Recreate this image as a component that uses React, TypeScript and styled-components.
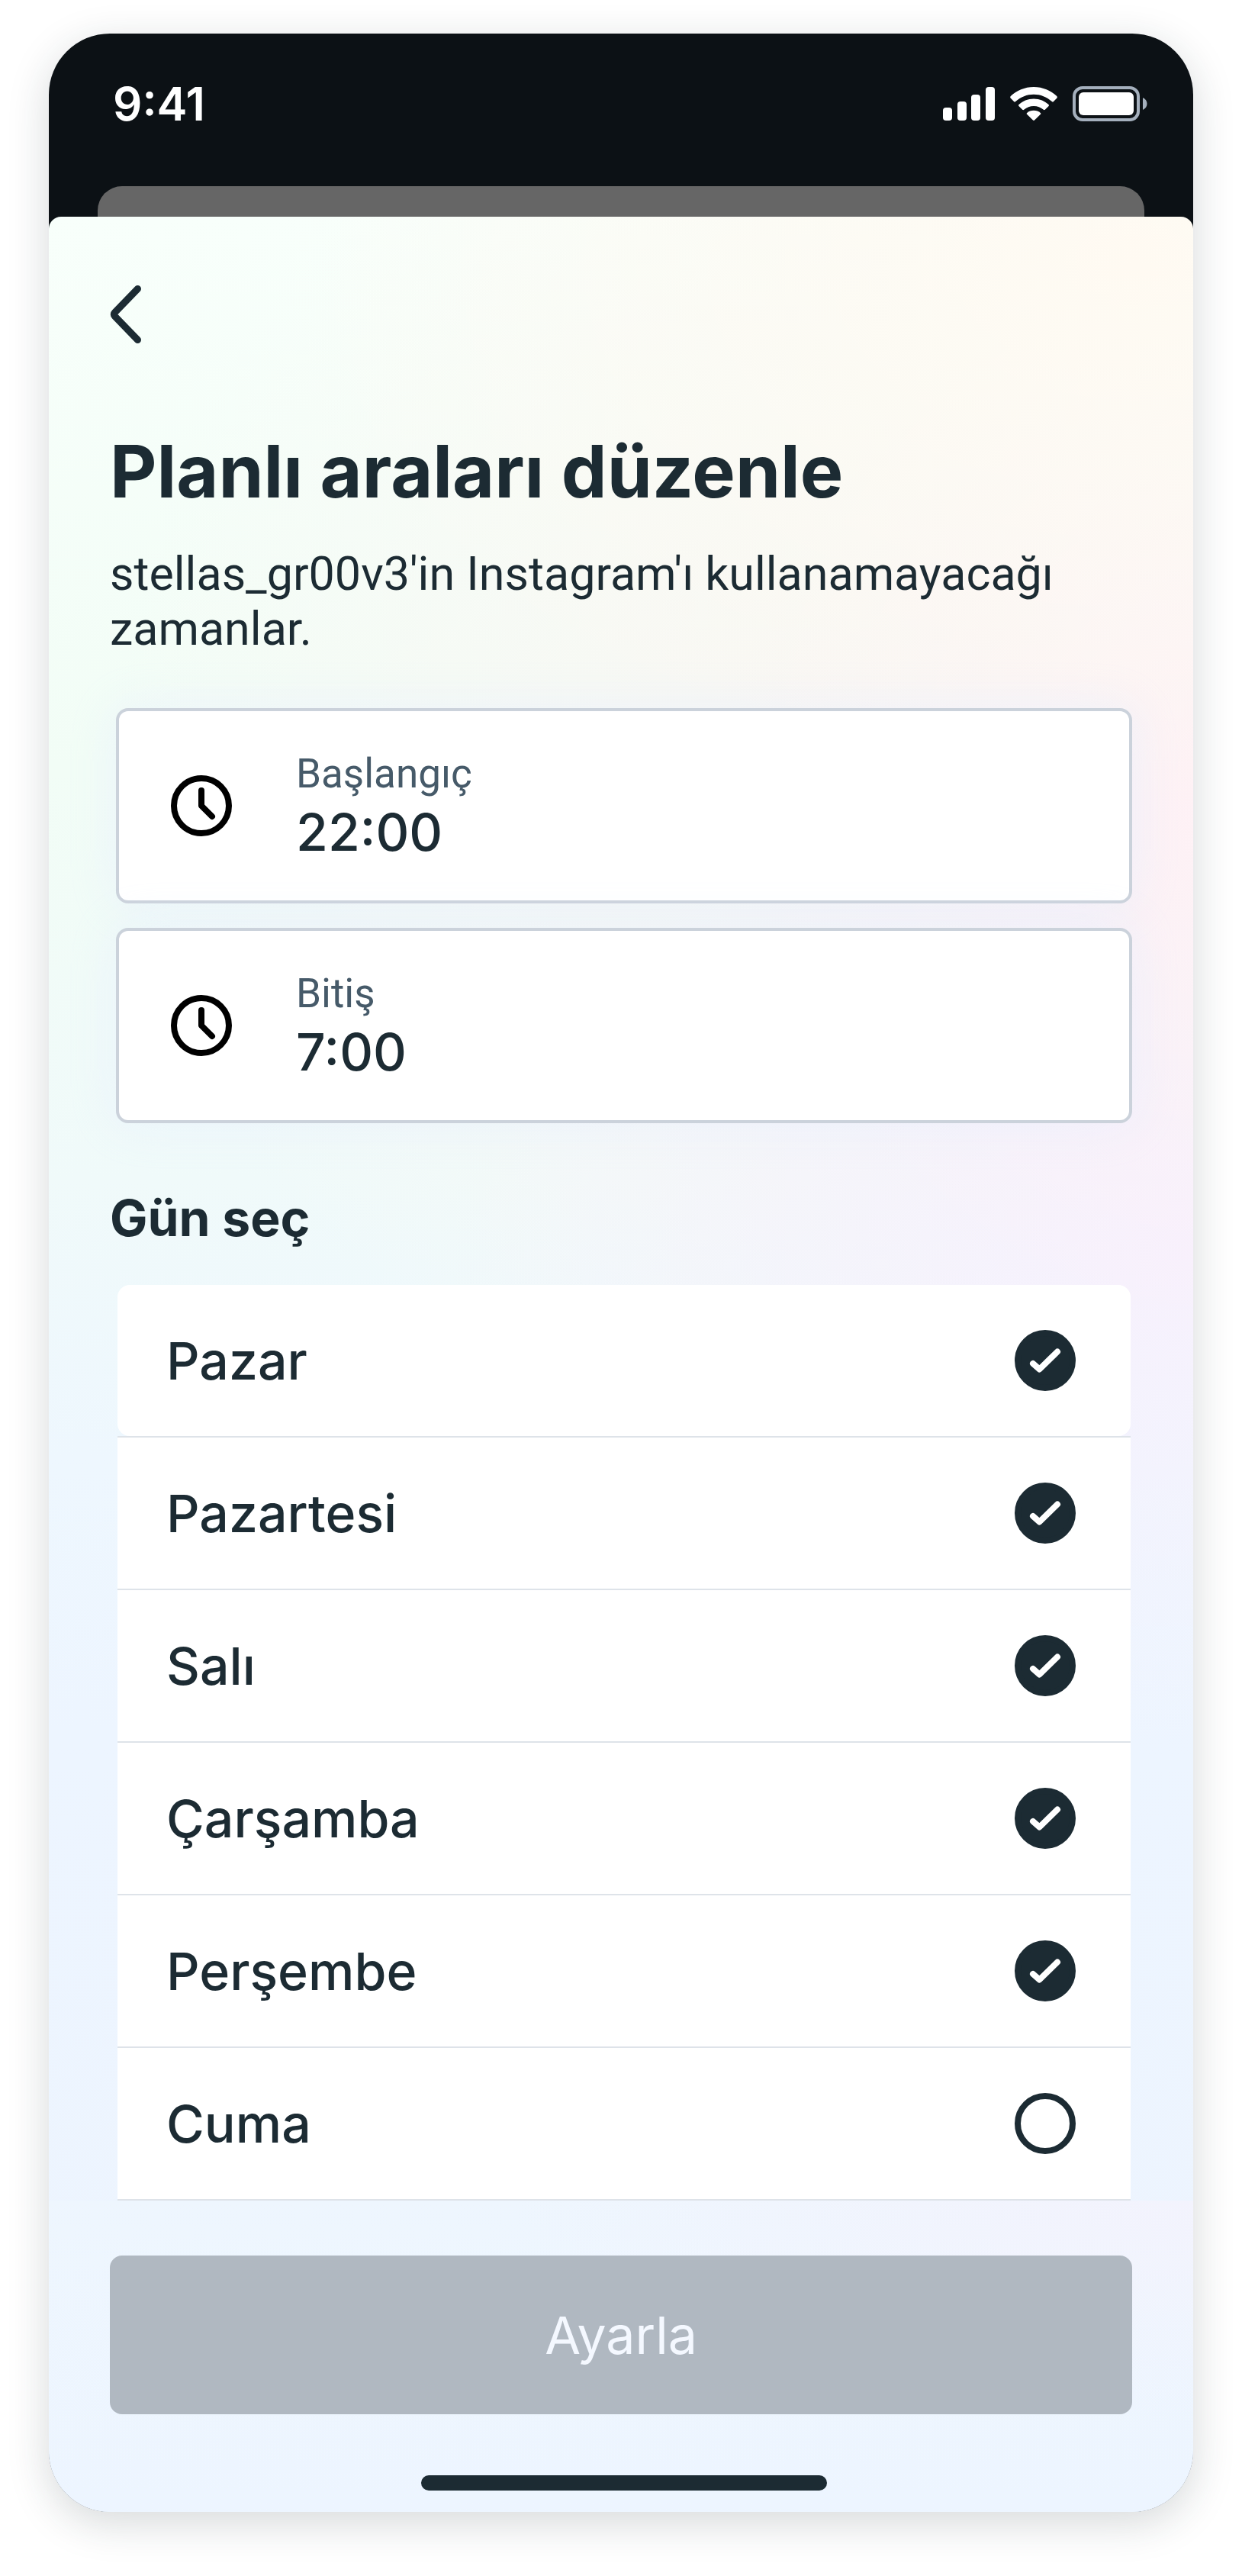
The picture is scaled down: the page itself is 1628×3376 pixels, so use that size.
import React, { useState } from "react";
import styled, { createGlobalStyle } from "styled-components";

const ink = "#1c2b33";
const display = `Inter, "Noto Sans", sans-serif`;
const text = `Roboto, "Noto Sans", sans-serif`;

const GlobalStyle = createGlobalStyle`
  *, *::before, *::after { box-sizing: border-box; }
  body { margin: 0; background: #fff; color: ${ink}; font-family: ${display}; }
  h1, h2, p, ul { margin: 0; padding: 0; }
`;

const Page = styled.main`
  min-height: 100vh;
  padding: 44px 64px 84px;
`;

const Phone = styled.div`
  border-radius: 80px;
  overflow: hidden;
  background: #0c1115;
  box-shadow: 0 14px 54px rgba(28, 43, 51, 0.18);
`;

const StatusBar = styled.header`
  display: flex;
  justify-content: space-between;
  align-items: flex-start;
  height: 200px;
  padding: 54px 60px 0 84px;
`;

const Clock = styled.span`
  color: #fff;
  font-size: 60px;
  font-weight: 600;
  line-height: 76px;
`;

const StatusIcons = styled.div`
  display: flex;
  align-items: center;
  gap: 20px;
  height: 76px;
  svg { display: block; }
`;

const BackSheet = styled.div`
  height: 40px;
  margin: 0 64px;
  border-radius: 32px 32px 0 0;
  background: #666;
`;

const Sheet = styled.section`
  border-radius: 16px 16px 0 0;
  overflow: hidden;
  background:
    radial-gradient(ellipse 75% 24% at 95% 2%, #fffaf2 0%, rgba(255, 250, 242, 0) 100%),
    radial-gradient(ellipse 45% 24% at 105% 25%, #fff0f5 0%, rgba(255, 240, 245, 0) 100%),
    radial-gradient(ellipse 65% 22% at 100% 45%, #f7f0fd 0%, rgba(247, 240, 253, 0) 100%),
    radial-gradient(ellipse 60% 30% at 65% 23%, #f9f7f3 0%, rgba(249, 247, 243, 0) 100%),
    linear-gradient(180deg, #f8fffb 0%, #f2fdf6 24%, #f0fafa 42%, #eef7fe 54%, #edf5ff 66%, #edf4fe 100%);
`;

const Body = styled.div`
  display: flex;
  flex-direction: column;
  align-items: stretch;
  padding: 88px 80px 0;
`;

const BackButton = styled.button`
  align-self: flex-start;
  display: block;
  padding: 0;
  border: 0;
  background: none;
  color: ${ink};
  cursor: pointer;
  svg { display: block; }
`;

const Title = styled.h1`
  margin-top: 110px;
  font-size: 95px;
  font-weight: 700;
  line-height: 112px;
`;

const Lead = styled.p`
  margin-top: 42px;
  font-family: ${text};
  font-size: 61px;
  line-height: 72px;
`;

const Fields = styled.div`
  display: flex;
  flex-direction: column;
  gap: 32px;
  margin: 68px 0 0 8px;
`;

const Field = styled.div`
  display: flex;
  align-items: center;
  gap: 84px;
  height: 256px;
  padding: 0 68px;
  border: 4px solid #cbd2db;
  border-radius: 16px;
  background: #fff;
  box-shadow: 0 0 64px rgba(230, 238, 255, 0.6);
  svg { display: block; flex: none; }
`;

const FieldText = styled.div`
  flex: 1;
  display: flex;
  flex-direction: column;
  gap: 4px;
  min-width: 0;
`;

const FieldLabel = styled.label`
  color: #465a69;
  font-family: ${text};
  font-size: 53px;
  line-height: 64px;
`;

const FieldInput = styled.input`
  width: 100%;
  height: 80px;
  padding: 0;
  border: 0;
  outline: 0;
  background: none;
  color: ${ink};
  font-family: ${display};
  font-size: 68px;
  font-weight: 500;
  line-height: 80px;
`;

const SectionTitle = styled.h2`
  margin-top: 84px;
  font-size: 66px;
  font-weight: 700;
  line-height: 80px;
`;

const DayList = styled.ul`
  margin: 48px 2px 0 10px;
  list-style: none;
`;

const DayItem = styled.li`
  border-bottom: 2px solid #dee3e9;
`;

const DayRow = styled.label<{ $rounded: boolean }>`
  display: flex;
  align-items: center;
  justify-content: space-between;
  height: 198px;
  padding: 0 72px 0 64px;
  border-radius: ${(p) => (p.$rounded ? "16px" : "0")};
  background: #fff;
  font-size: 68px;
  font-weight: 500;
  line-height: 80px;
  cursor: pointer;
`;

const Check = styled.span`
  display: grid;
  flex: none;
  > * { grid-area: 1 / 1; }
`;

const CheckInput = styled.input`
  appearance: none;
  width: 80px;
  height: 80px;
  margin: 0;
  border: 8px solid ${ink};
  border-radius: 50%;
  &:checked { background: ${ink}; }
  & + svg { visibility: hidden; pointer-events: none; z-index: 1; }
  &:checked + svg { visibility: visible; }
`;

const Footer = styled.footer`
  padding: 72px 80px 28px;
  background:
    radial-gradient(ellipse 60% 70% at 100% 0%, #f3f3fd 0%, rgba(243, 243, 253, 0) 100%),
    linear-gradient(180deg, #eef6fe, #edf5ff);
`;

const SubmitButton = styled.button`
  display: block;
  width: 100%;
  height: 208px;
  border: 0;
  border-radius: 16px;
  background: #b0b8c1;
  color: #f4f8ff;
  font-family: ${display};
  font-size: 68px;
  font-weight: 400;
  line-height: 80px;
`;

const HomeBar = styled.div`
  display: flex;
  justify-content: center;
  padding: 80px 0 0 8px;
`;

const HomeIndicator = styled.div`
  width: 40%;
  height: 20px;
  border-radius: 10px;
  background: ${ink};
`;

const SignalIcon = () => (
  <svg width="68" height="44" viewBox="0 0 68 44" fill="#fff" aria-hidden="true">
    <rect x="0" y="27" width="12" height="17" rx="4" />
    <rect x="19" y="19" width="12" height="25" rx="4" />
    <rect x="37" y="10" width="12" height="34" rx="4" />
    <rect x="56" y="0" width="12" height="44" rx="4" />
  </svg>
);

const WifiIcon = () => (
  <svg width="62" height="44" viewBox="0 0 62 44" fill="#fff" aria-hidden="true">
    <path d="M31 0C43 0 53.500 4.800 61 11.800Q62.500 13.300 61.200 14.800L57 19Q56 20 54.800 19C48 13 40 9.700 31 9.700S14 13 7.200 19Q6 20 5 19L.8 14.800Q-.5 13.300 1 11.800C8.500 4.800 19 0 31 0Z" />
    <path d="M31 15.500C39 15.500 45.500 18.500 50.500 23Q51.500 24 50.600 25L45.800 29.800Q44.800 30.600 43.800 29.800C40 26.600 36 25 31 25S22 26.600 18.200 29.800Q17.200 30.600 16.200 29.800L11.400 25Q10.500 24 11.500 23C16.500 18.500 23 15.500 31 15.500Z" />
    <path d="M31 30.800C34.600 30.800 37.500 32 39.800 33.900Q40.800 34.900 39.900 35.800L32 43.500Q31 44.400 30 43.500L22.100 35.800Q21.200 34.900 22.200 33.900C24.500 32 27.400 30.800 31 30.800Z" />
  </svg>
);

const BatteryIcon = () => (
  <svg width="98" height="46" viewBox="0 0 98 46" aria-hidden="true">
    <rect x="2" y="2" width="84" height="42" rx="11" fill="none" stroke="#a5b0bd" strokeWidth="4" />
    <rect x="8" y="8" width="72" height="30" rx="6" fill="#fff" />
    <path d="M92 15C95.500 16.500 97.500 19.500 97.500 23S95.500 29.500 92 31Z" fill="#a5b0bd" />
  </svg>
);

const ChevronIcon = () => (
  <svg width="44" height="80" viewBox="0 0 44 80" fill="none" stroke="currentColor" strokeWidth="9" strokeLinecap="round" strokeLinejoin="round" aria-hidden="true">
    <path d="M36.500 6.500L6.500 37.500Q4 40 6.500 42.500L36.500 73.500" />
  </svg>
);

const ClockIcon = () => (
  <svg width="80" height="80" viewBox="0 0 80 80" fill="none" stroke="#000" strokeLinecap="round" strokeLinejoin="round" aria-hidden="true">
    <circle cx="40" cy="40" r="36" strokeWidth="8" />
    <path d="M40 20V40L54 54" strokeWidth="8" />
  </svg>
);

const CheckIcon = () => (
  <svg width="80" height="80" viewBox="0 0 80 80" fill="none" stroke="#fff" strokeWidth="8" strokeLinecap="round" strokeLinejoin="round" aria-hidden="true">
    <path d="M24 44L32.500 51.500L56 28.500" />
  </svg>
);

const times = [
  { id: "start", label: "Başlangıç", value: "22:00" },
  { id: "end", label: "Bitiş", value: "7:00" },
];

const days = ["Pazar", "Pazartesi", "Salı", "Çarşamba", "Perşembe", "Cuma"];

export default function App() {
  const [selected, setSelected] = useState<string[]>(days.slice(0, 5));
  const toggle = (day: string) =>
    setSelected((now) => (now.includes(day) ? now.filter((d) => d !== day) : [...now, day]));

  return (
    <Page lang="tr">
      <GlobalStyle />
      <Phone>
        <StatusBar>
          <Clock>9:41</Clock>
          <StatusIcons>
            <SignalIcon />
            <WifiIcon />
            <BatteryIcon />
          </StatusIcons>
        </StatusBar>
        <BackSheet />
        <Sheet>
          <Body>
            <BackButton type="button" aria-label="Geri">
              <ChevronIcon />
            </BackButton>
            <Title>Planlı araları düzenle</Title>
            <Lead>stellas_gr00v3'in Instagram'ı kullanamayacağı zamanlar.</Lead>
            <Fields>
              {times.map((t) => (
                <Field key={t.id}>
                  <ClockIcon />
                  <FieldText>
                    <FieldLabel htmlFor={t.id}>{t.label}</FieldLabel>
                    <FieldInput id={t.id} type="text" defaultValue={t.value} />
                  </FieldText>
                </Field>
              ))}
            </Fields>
            <SectionTitle>Gün seç</SectionTitle>
            <DayList>
              {days.map((day, i) => (
                <DayItem key={day}>
                  <DayRow $rounded={i === 0}>
                    {day}
                    <Check>
                      <CheckInput
                        type="checkbox"
                        checked={selected.includes(day)}
                        onChange={() => toggle(day)}
                      />
                      <CheckIcon />
                    </Check>
                  </DayRow>
                </DayItem>
              ))}
            </DayList>
          </Body>
          <Footer>
            <SubmitButton type="button">Ayarla</SubmitButton>
            <HomeBar>
              <HomeIndicator />
            </HomeBar>
          </Footer>
        </Sheet>
      </Phone>
    </Page>
  );
}
